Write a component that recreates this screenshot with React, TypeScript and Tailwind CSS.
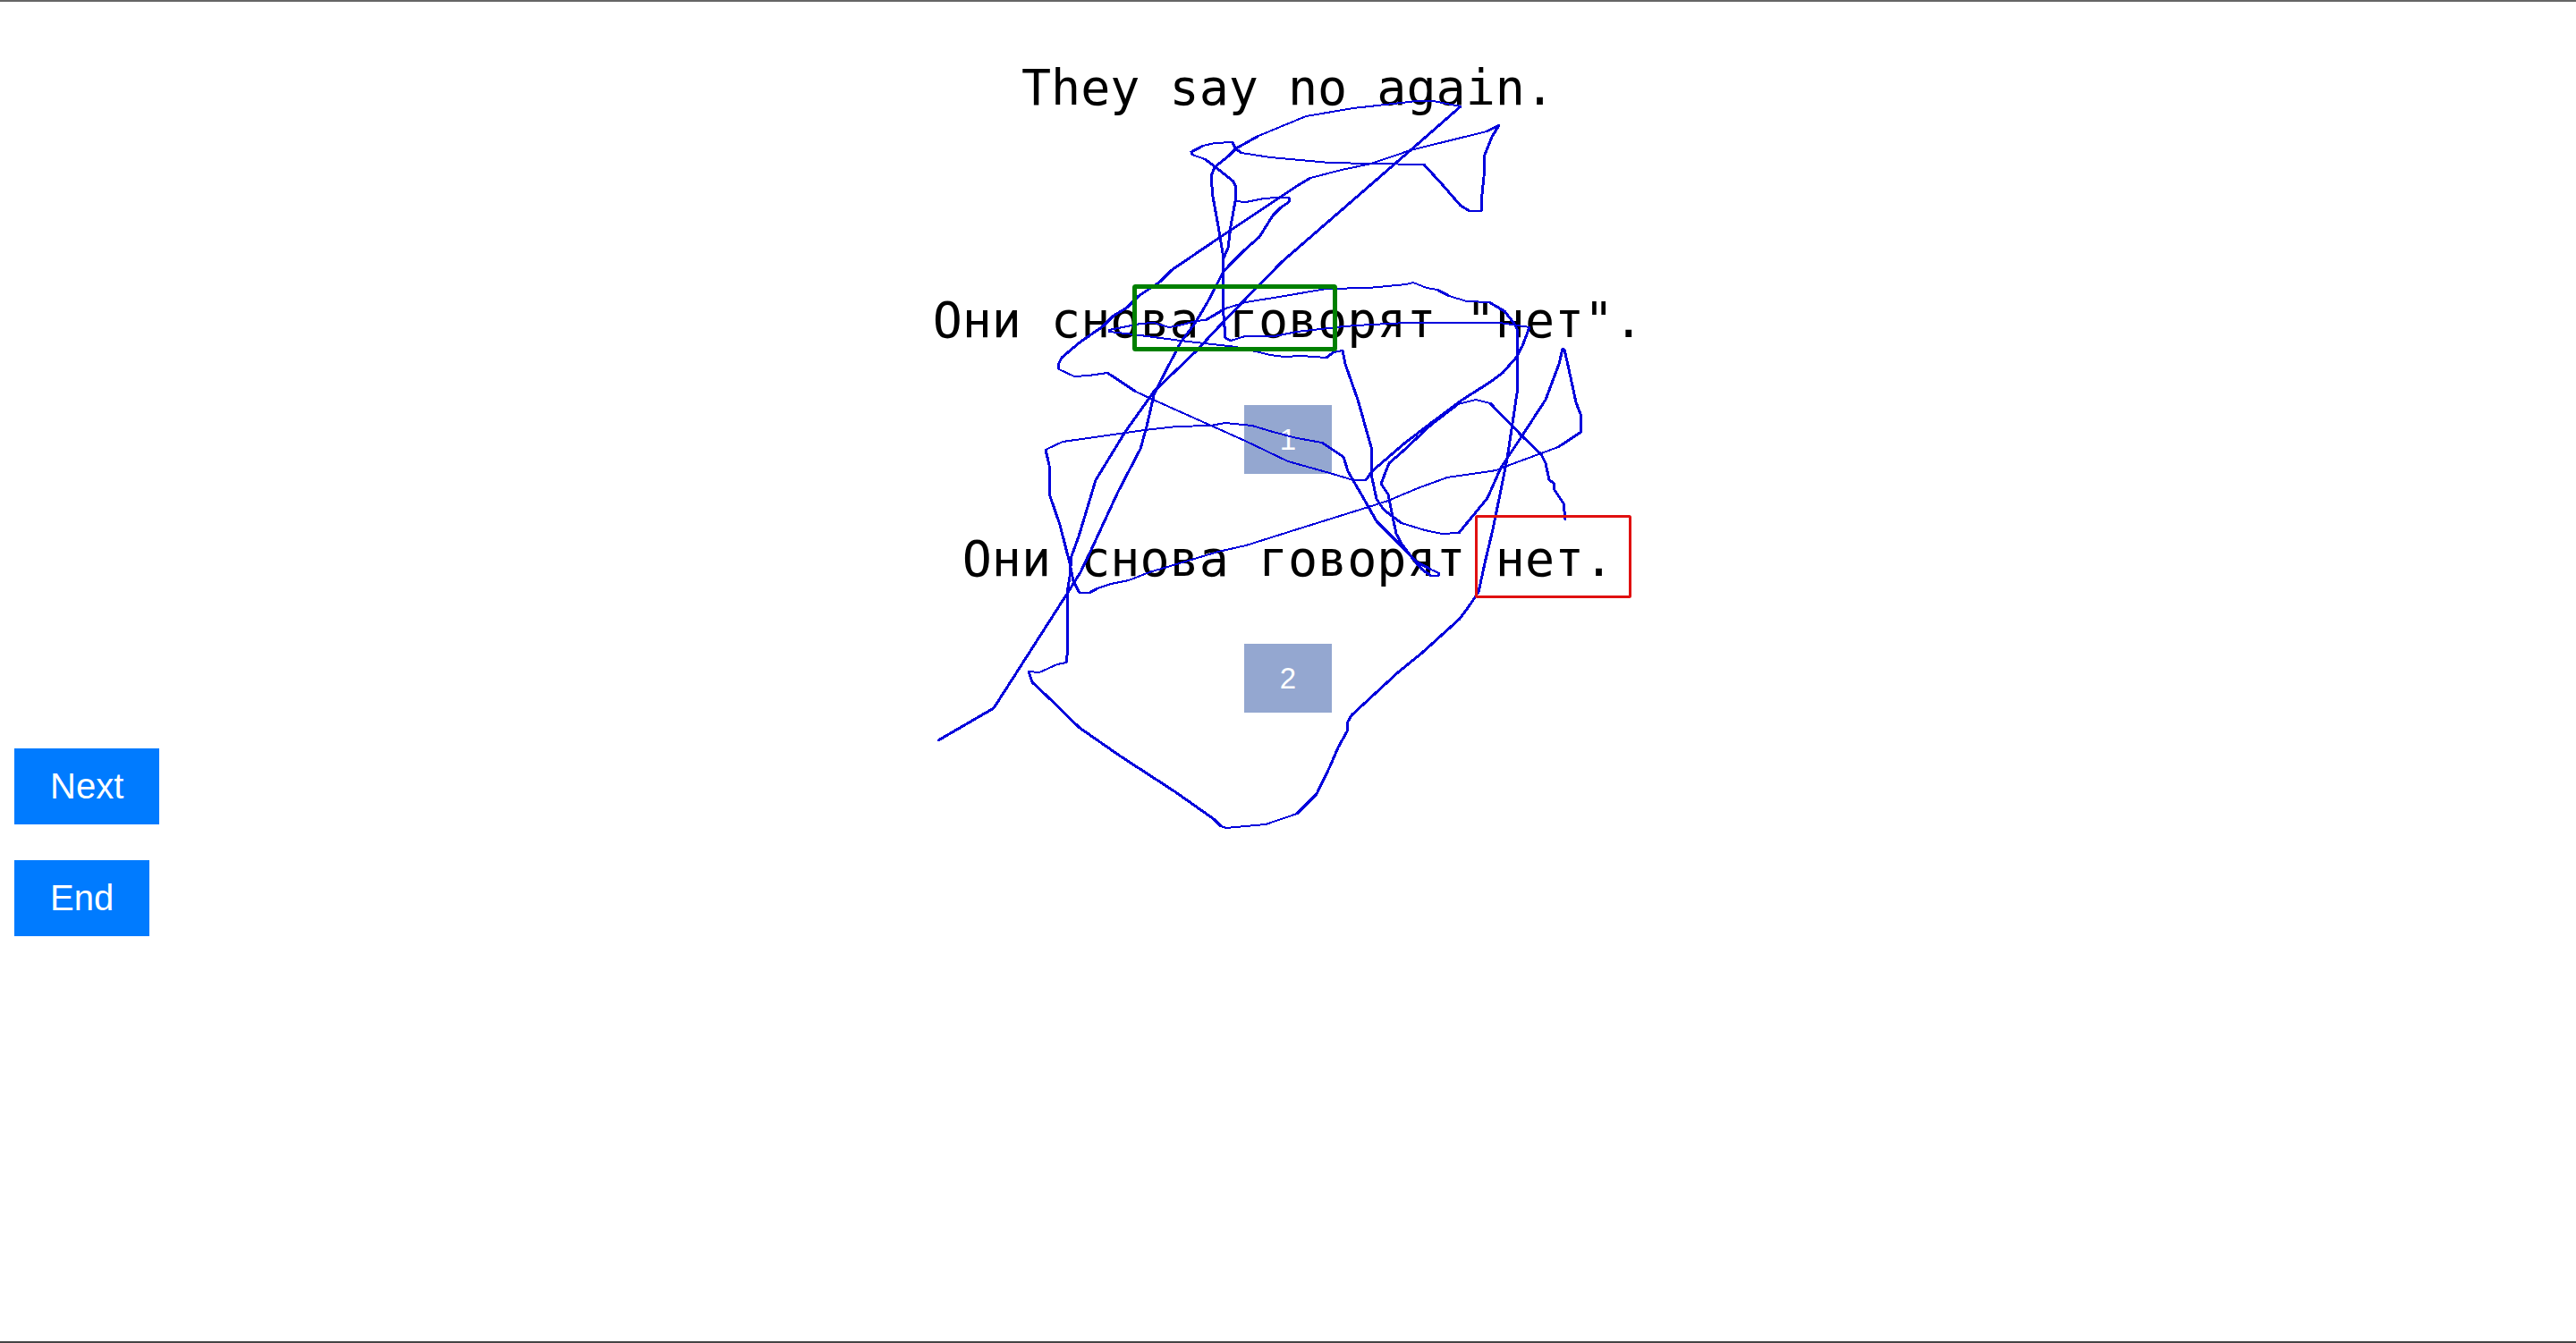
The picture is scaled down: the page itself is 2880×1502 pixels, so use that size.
type Point = [number, number];

// One continuous pointer trail, in the coordinates of the overlay's view box.
const trail: Point[] = [
  [1049, 828], [1111, 792], [1193, 664], [1208, 640], [1220, 615], [1250, 550], [1275, 502], [1282, 477], [1290, 442], [1297, 427],
  [1320, 383], [1337, 360], [1350, 338], [1358, 323], [1367, 305], [1374, 297], [1391, 280], [1408, 265], [1423, 241], [1432, 232],
  [1441, 226], [1441, 221], [1428, 221], [1413, 222], [1393, 226], [1381, 225], [1376, 253], [1373, 277], [1368, 289], [1362, 253],
  [1356, 220], [1354, 197], [1358, 187], [1373, 175], [1382, 166], [1407, 152], [1460, 130], [1513, 121], [1567, 115], [1583, 113],
  [1602, 113], [1633, 119], [1577, 168], [1433, 293], [1388, 339], [1363, 365], [1337, 393], [1290, 438], [1258, 483], [1225, 537],
  [1206, 600], [1198, 622], [1196, 645], [1193, 663], [1193, 733], [1192, 741], [1182, 743], [1162, 752], [1150, 751], [1154, 763],
  [1170, 778], [1207, 814], [1253, 846], [1313, 885], [1357, 916], [1365, 924], [1371, 926], [1415, 922], [1450, 910], [1472, 888],
  [1487, 857], [1496, 836], [1506, 818], [1507, 807], [1511, 800], [1563, 752], [1590, 730], [1632, 692], [1643, 677], [1653, 662],
  [1660, 630], [1669, 592], [1677, 553], [1685, 513], [1690, 480], [1697, 433], [1696, 400], [1697, 370], [1693, 362], [1682, 348],
  [1665, 338], [1640, 337], [1620, 331], [1607, 324], [1595, 322], [1580, 316], [1572, 318], [1530, 322], [1483, 323], [1430, 332],
  [1393, 338], [1370, 345], [1348, 358], [1337, 359], [1318, 364], [1307, 366], [1290, 361], [1275, 362], [1240, 369], [1240, 371],
  [1267, 374], [1320, 381], [1382, 388], [1408, 394], [1420, 397], [1436, 399], [1455, 398], [1483, 400], [1491, 394], [1501, 392],
  [1504, 407], [1518, 447], [1533, 500], [1533, 530], [1539, 558], [1547, 570], [1567, 585], [1593, 593], [1612, 597], [1631, 596],
  [1663, 557], [1678, 523], [1702, 487], [1728, 447], [1743, 407], [1747, 390], [1749, 391], [1754, 413], [1762, 450], [1767, 463],
  [1768, 483], [1742, 500], [1685, 521], [1673, 526], [1618, 534], [1585, 546], [1552, 560], [1530, 567], [1450, 592], [1393, 610],
  [1362, 617], [1285, 640], [1262, 649], [1242, 653], [1227, 658], [1218, 663], [1207, 663], [1200, 650], [1196, 630], [1185, 587],
  [1174, 555], [1173, 520], [1169, 503], [1188, 494], [1280, 481], [1315, 477], [1353, 476], [1370, 473], [1400, 476], [1423, 483],
  [1450, 490], [1478, 495], [1502, 511], [1507, 527], [1530, 567], [1539, 583], [1563, 607], [1583, 628], [1600, 637], [1609, 641],
  [1608, 644], [1600, 644], [1590, 637], [1578, 623], [1567, 608], [1561, 597], [1557, 578], [1552, 553], [1544, 541], [1553, 518],
  [1568, 505], [1600, 475], [1630, 452], [1650, 447], [1666, 451], [1702, 488], [1723, 508], [1728, 518], [1732, 537], [1737, 540],
  [1738, 548], [1748, 563], [1750, 581],
];

const sweep: Point[] = [
  [1368, 289], [1367, 305], [1367, 340], [1370, 378], [1376, 381], [1392, 376], [1425, 376], [1450, 371], [1503, 365], [1533, 363],
  [1573, 361], [1677, 361], [1710, 366], [1702, 387], [1695, 400], [1680, 417], [1665, 428], [1635, 447], [1600, 473], [1570, 496],
  [1534, 527], [1527, 537], [1513, 537], [1490, 530], [1440, 516], [1392, 493], [1287, 446], [1270, 438], [1238, 417], [1217, 420],
  [1201, 421], [1184, 413], [1183, 408], [1187, 400], [1207, 383], [1233, 365], [1245, 353], [1260, 344], [1273, 331], [1297, 315],
  [1310, 302], [1360, 268], [1450, 208], [1465, 199], [1500, 190], [1533, 183], [1577, 168], [1662, 147], [1676, 140], [1668, 153],
  [1660, 173], [1659, 198], [1657, 217], [1656, 236], [1643, 236], [1633, 230], [1613, 207], [1592, 184], [1533, 183], [1487, 182],
  [1420, 176], [1388, 171], [1381, 166], [1378, 159], [1358, 160], [1345, 163], [1332, 170], [1333, 173], [1347, 178], [1358, 186],
  [1379, 203], [1382, 210], [1381, 225],
];

// Flat strokes are a little thinner than steep ones.
function strokeWidth([x1, y1]: Point, [x2, y2]: Point) {
  return Math.abs(y2 - y1) < Math.abs(x2 - x1) / 2 ? 2 : 3;
}

function Stroke({ points }: { points: Point[] }) {
  return (
    <g stroke="#0000dc" strokeLinecap="round" shapeRendering="crispEdges">
      {points.slice(1).map((p, i) => (
        <line key={i} x1={points[i][0]} y1={points[i][1]} x2={p[0]} y2={p[1]} strokeWidth={strokeWidth(points[i], p)} />
      ))}
    </g>
  );
}

function Sentence({ children }: { children: string }) {
  return (
    <p className="whitespace-nowrap font-['DejaVu_Sans_Mono',monospace] text-[55px] leading-[72px] text-black">{children}</p>
  );
}

function Choice({ label }: { label: string }) {
  return (
    <button type="button" className="bg-[#94a7d0] px-10 py-5 text-[33px] leading-[37px] text-white">
      {label}
    </button>
  );
}

function Action({ label }: { label: string }) {
  return (
    <button type="button" className="bg-[#007bff] px-10 py-5 text-[40px] leading-[45px] text-white">
      {label}
    </button>
  );
}

export default function App() {
  return (
    <main className="relative min-h-screen overflow-hidden border-t-2 border-b-2 border-t-[#666] border-b-[#444] bg-white pt-[60px] font-['Liberation_Sans',Arial,sans-serif]">
      <section className="flex flex-col items-center">
        <Sentence>They say no again.</Sentence>
        <div className="mt-[188px] flex flex-col items-center gap-[59px]">
          <Sentence>Они снова говорят "нет".</Sentence>
          <Choice label="1" />
          <Sentence>Они снова говорят нет.</Sentence>
          <Choice label="2" />
        </div>
      </section>
      <div className="mt-10 flex flex-col items-start gap-10 px-4">
        <Action label="Next" />
        <Action label="End" />
      </div>
      <svg
        className="pointer-events-none absolute -top-0.5 left-1/2 -translate-x-1/2"
        width="800"
        height="940"
        viewBox="1040 0 800 940"
        fill="none"
        aria-hidden="true"
      >
        <Stroke points={trail} />
        <Stroke points={sweep} />
        <rect x="1268.5" y="320.5" width="224" height="70" rx="1" stroke="#008000" strokeWidth="5" />
        <rect x="1650.5" y="577.5" width="172" height="90" rx="1" stroke="#e01010" strokeWidth="3" />
      </svg>
    </main>
  );
}
